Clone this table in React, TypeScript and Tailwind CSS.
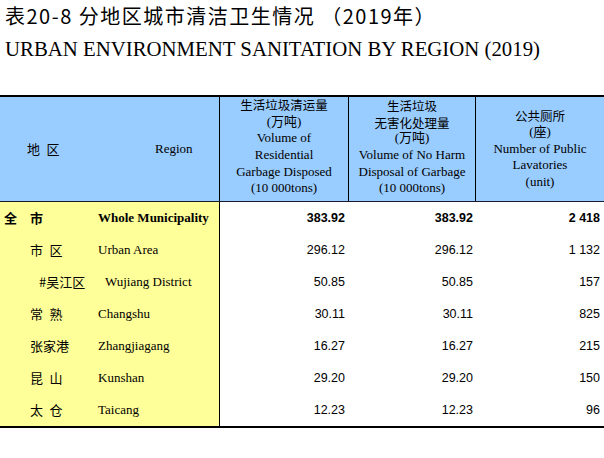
const rows = [
  { cn: "全\u3000市", cnPad: "pl-[4px]", en: "Whole Municipality", enPad: "", a: "383.92", b: "383.92", c: "2 418", bold: true },
  { cn: "市\u2002区", cnPad: "pl-[30px]", en: "Urban Area", enPad: "", a: "296.12", b: "296.12", c: "1 132" },
  { cn: "#吴江区", cnPad: "pl-[39px]", en: "Wujiang District", enPad: "pl-[7px]", a: "50.85", b: "50.85", c: "157" },
  { cn: "常\u2002熟", cnPad: "pl-[30px]", en: "Changshu", enPad: "", a: "30.11", b: "30.11", c: "825" },
  { cn: "张家港", cnPad: "pl-[30px]", en: "Zhangjiagang", enPad: "", a: "16.27", b: "16.27", c: "215" },
  { cn: "昆\u2002山", cnPad: "pl-[30px]", en: "Kunshan", enPad: "", a: "29.20", b: "29.20", c: "150" },
  { cn: "太\u2002仓", cnPad: "pl-[30px]", en: "Taicang", enPad: "", a: "12.23", b: "12.23", c: "96" },
];

const cjk = "font-['Noto_Sans_CJK_SC',sans-serif]";
const times = "font-['Liberation_Serif','Noto_Sans_CJK_SC',serif]";
const arial = "font-['Liberation_Sans',sans-serif]";

export default function App() {
  return (
    <div className="w-[604px] h-[458px] bg-white text-black overflow-hidden">
      {/* Title */}
      <div className="px-[5px] pt-[3px]">
        <h1 className={`${cjk} text-[20px] leading-[26px] tracking-[1.5px] whitespace-pre`}>
          表20-8 分地区城市清洁卫生情况 （2019年）
        </h1>
        <h2 className={`${times} text-[20.8px] leading-[28px] mt-[6px]`}>
          URBAN ENVIRONMENT SANITATION BY REGION (2019)
        </h2>
      </div>

      {/* Table */}
      <div className="mt-[32px] border-t-2 border-b-2 border-black">
        {/* Header */}
        <div className="grid grid-cols-[219px_129px_127px_129px] h-[105px] bg-[#99ccff] border-b border-[#1a1a2e] text-[13px] leading-[16.6px]">
          <div className="flex items-center">
            <span className={`${cjk} w-[155px] pl-[27px]`}>地&ensp;区</span>
            <span className={times}>Region</span>
          </div>
          <div className="border-l border-black flex flex-col items-center justify-center text-center pb-[4px]">
            <span className={`${cjk} text-[12.5px]`}>生活垃圾清运量</span>
            <span className={times}>(万吨)</span>
            <span className={times}>Volume of</span>
            <span className={times}>Residential</span>
            <span className={times}>Garbage Disposed</span>
            <span className={times}>(10 000tons)</span>
          </div>
          <div className="border-l border-black flex flex-col items-center justify-center text-center pb-[4px]">
            <span className={`${cjk} text-[12.5px] leading-[18.2px]`}>生活垃圾</span>
            <span className={`${cjk} text-[12.5px] leading-[18.2px] -mt-[1.6px]`}>无害化处理量</span>
            <span className={`${times} -mt-[1.6px]`}>(万吨)</span>
            <span className={times}>Volume of No Harm</span>
            <span className={times}>Disposal of Garbage</span>
            <span className={times}>(10 000tons)</span>
          </div>
          <div className="border-l border-black flex flex-col items-center justify-center text-center">
            <span className={`${cjk} text-[12.5px]`}>公共厕所</span>
            <span className={times}>(座)</span>
            <span className={times}>Number of Public</span>
            <span className={times}>Lavatories</span>
            <span className={times}>(unit)</span>
          </div>
        </div>

        {/* Body */}
        {rows.map((r) => (
          <div
            key={r.en}
            className={`grid grid-cols-[219px_129px_127px_129px] h-[32px] text-[13px] ${r.bold ? "font-bold" : ""}`}
          >
            <div className="bg-[#ffff99] flex items-center">
              <span className={`${cjk} ${r.cnPad} w-[98px] whitespace-pre`}>{r.cn}</span>
              <span className={`${times} ${r.enPad}`}>{r.en}</span>
            </div>
            <div className={`${arial} border-l border-black flex items-center justify-end pr-[3px] text-[12.5px]`}>{r.a}</div>
            <div className={`${arial} flex items-center justify-end pr-[2px] text-[12.5px]`}>{r.b}</div>
            <div className={`${arial} flex items-center justify-end pr-[4px] text-[12.5px]`}>{r.c}</div>
          </div>
        ))}
      </div>
    </div>
  );
}
